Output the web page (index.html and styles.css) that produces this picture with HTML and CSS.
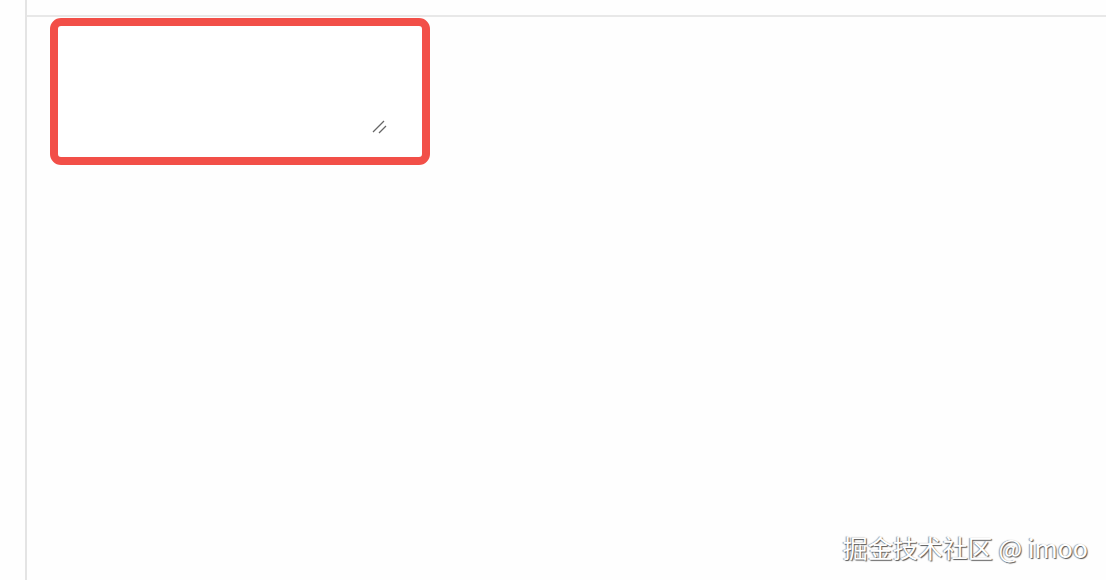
FILE: index.html
```html
<!DOCTYPE html>
<html lang="zh-CN">
<head>
  <meta charset="UTF-8" />
  <title>Textarea outline</title>
  <link rel="stylesheet" href="styles.css">
</head>
<body>

  <div class="frame">
    <div class="toolbar"></div>

    <div class="field">
      <textarea class="input"></textarea>
      <!-- 拖拽角 -->
      <svg class="grip" width="16" height="16" viewBox="0 0 16 16">
        <path d="M2 14 L13 3 M8 15 L15 8" stroke="#666" stroke-width="1.3" fill="none" />
      </svg>
    </div>
  </div>

  <!-- 水印 -->
  <div class="watermark">掘金技术社区 @ imoo</div>

</body>
</html>
```

FILE: styles.css
```css
html, body {
  height: 100%;
}

body {
  margin: 0;
  background: #fefefe;
  font-family: 'Noto Sans CJK SC', 'Noto Sans', sans-serif;
  overflow: hidden;
}

.frame {
  margin-left: 25px;
  height: 100%;
  border-left: 2px solid #e4e4e4;
}

.toolbar {
  height: 15px;
  border-bottom: 2px solid #e8e8e8;
}

.field {
  position: relative;
  width: 380px;
  margin: 1px 0 0 23px;
  padding: 4px 32px 20px 4px;
  border: 8px solid #f24f48;
  border-radius: 11px;
  box-sizing: border-box;
  background: #fff;
}

.input {
  display: block;
  width: 328px;
  height: 107px;
  margin: 0;
  padding: 0;
  border: none;
  outline: none;
  background: #fff;
  resize: none;
}

.grip {
  position: absolute;
  left: 313px;
  top: 92px;
}

.watermark {
  position: absolute;
  right: 18px;
  bottom: 18px;
  font-size: 25px;
  line-height: 30px;
  color: #fff;
  text-shadow: 1px 1px 1px #555, -1px 0 1px #999;
}
```
